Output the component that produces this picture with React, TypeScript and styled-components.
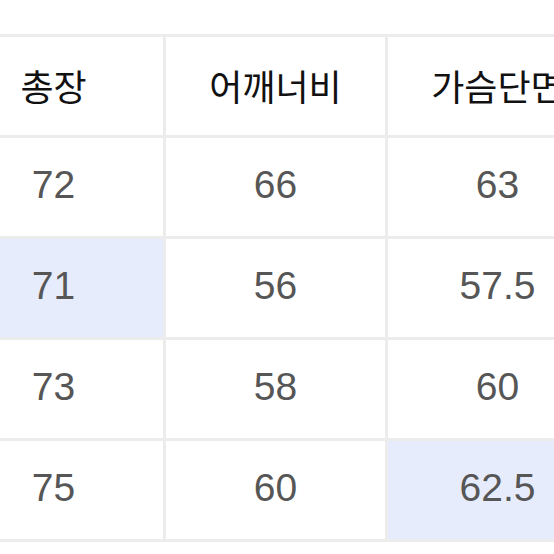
import styled, { createGlobalStyle } from 'styled-components'

const GlobalStyle = createGlobalStyle`
  html, body {
    margin: 0;
    padding: 0;
    background: #ffffff;
  }
`

const Page = styled.div`
  width: 554px;
  height: 554px;
  overflow: hidden;
  padding-top: 34px;
  box-sizing: border-box;
  background: #ffffff;
`

const Table = styled.div`
  display: grid;
  grid-template-columns: repeat(3, 219px);
  grid-auto-rows: 98px;
  gap: 3px;
  padding: 3px;
  width: max-content;
  margin-left: -59px;
  background: #ececec;
`

const Cell = styled.div<{ $head?: boolean; $marked?: boolean }>`
  display: flex;
  align-items: center;
  justify-content: center;
  background: ${p => (p.$marked ? '#e7ecfc' : '#ffffff')};
  color: ${p => (p.$head ? '#111111' : '#565656')};
  font-family: ${p =>
    p.$head
      ? '"Noto Sans CJK KR", "Noto Sans", sans-serif'
      : '"Liberation Sans", Arial, sans-serif'};
  font-size: ${p => (p.$head ? '36px' : '39px')};
  font-weight: 400;
  padding-bottom: ${p => (p.$head ? '3px' : '5px')};
  box-sizing: border-box;
  white-space: nowrap;
`

const headers = ['총장', '어깨너비', '가슴단면']

const rows = [
  ['72', '66', '63'],
  ['71', '56', '57.5'],
  ['73', '58', '60'],
  ['75', '60', '62.5'],
]

// highlighted cells, as "row-col"
const marked = ['1-0', '3-2']

const App = () => (
  <>
    <GlobalStyle />
    <Page>
      <Table>
        {headers.map(h => (
          <Cell key={h} $head>
            {h}
          </Cell>
        ))}
        {rows.map((row, r) =>
          row.map((value, c) => (
            <Cell key={`${r}-${c}`} $marked={marked.includes(`${r}-${c}`)}>
              {value}
            </Cell>
          ))
        )}
      </Table>
    </Page>
  </>
)

export default App
